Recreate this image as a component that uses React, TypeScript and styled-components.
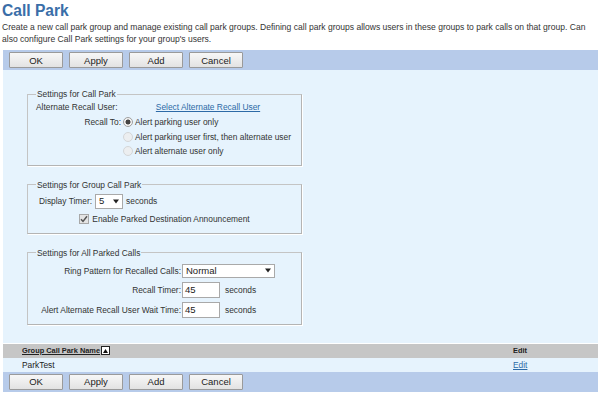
import React from "react";
import styled, { createGlobalStyle } from "styled-components";

const FONT = `"Liberation Sans", Arial, sans-serif`;

const Global = createGlobalStyle`
  body { margin: 0; background: #fff; font-family: ${FONT}; font-size: 8.4px; color: #333; }
`;

const Page = styled.div`
  width: 600px;
  padding: 0 2px 0 3px;
  box-sizing: border-box;
`;

const Title = styled.h1`
  margin: 0 0 0 -1px;
  font-size: 15.6px;
  line-height: 22px;
  font-weight: bold;
  color: #3a6ea8;
`;

const Desc = styled.p`
  margin: 0 0 5px -1px;
  font-size: 8.55px;
  line-height: 11.5px;
  color: #333;
`;

const Toolbar = styled.div`
  display: flex;
  gap: 6px;
  align-items: center;
  height: 20px;
  padding: 0 6px;
  background: #b7cbea;
`;

const Button = styled.button`
  width: 54px;
  height: 16px;
  padding: 0;
  font-family: ${FONT};
  font-size: 9.5px;
  color: #222;
  background: linear-gradient(#f7f7f7, #e3e3e3);
  border: 1px solid #9a9a9a;
  border-radius: 1px;
`;

const Panel = styled.div`
  background: #e6f3fd;
  padding: 18px 0 18px 24px;
  display: flex;
  flex-direction: column;
`;

const Fieldset = styled.fieldset<{ $pt?: number; $pb?: number; $mt?: number }>`
  width: 275px;
  box-sizing: border-box;
  margin: ${(p) => p.$mt ?? 0}px 0 0 0;
  padding: ${(p) => p.$pt ?? 1}px 8px ${(p) => p.$pb ?? 8}px 8px;
  border: 1px solid #c4c4c4;
  border-right-color: #b4b4b4;
  border-bottom-color: #b4b4b4;
  box-shadow: 1px 1px 0 #fff;
`;

const Legend = styled.legend`
  padding: 0 1px;
  font-size: 8.4px;
  line-height: 12px;
  color: #333;
`;

const Grid = styled.div<{ $cols: string; $gap?: number }>`
  display: grid;
  grid-template-columns: ${(p) => p.$cols};
  row-gap: ${(p) => p.$gap ?? 3}px;
  align-items: center;
`;

const Label = styled.div<{ $align?: string; $top?: boolean; $pr?: number }>`
  text-align: ${(p) => p.$align ?? "right"};
  padding-right: ${(p) => p.$pr ?? 2}px;
  white-space: nowrap;
  font-size: 8.4px;
  line-height: 12px;
  ${(p) => (p.$top ? "align-self: start; padding-top: 1px;" : "")}
`;

const Cell = styled.div<{ $center?: boolean; $pl?: number; $gap?: number }>`
  display: flex;
  align-items: center;
  gap: ${(p) => p.$gap ?? 4}px;
  min-height: 12px;
  white-space: nowrap;
  font-size: 8.4px;
  line-height: 12px;
  padding-left: ${(p) => p.$pl ?? 0}px;
  ${(p) => (p.$center ? "justify-content: center;" : "")}
`;

const Link = styled.a`
  color: #2d6aa6;
  text-decoration: underline;
  font-size: 8.4px;
  cursor: pointer;
`;

const Radio = styled.span<{ $checked?: boolean; $disabled?: boolean }>`
  width: 10px;
  height: 10px;
  border-radius: 50%;
  box-sizing: border-box;
  border: 1px solid ${(p) => (p.$disabled ? "#d4d6d8" : "#a0a0a0")};
  background: ${(p) =>
    p.$checked
      ? "radial-gradient(circle, #444 0 2.2px, #f2f2f2 2.8px)"
      : "#eceef0"};
  margin-right: 2px;
  flex: none;
`;

const RadioLine = styled.div`
  display: flex;
  align-items: center;
  height: 14.5px;
  white-space: nowrap;
`;

const Check = styled.span`
  width: 10px;
  height: 10px;
  box-sizing: border-box;
  border: 1px solid #a8a8a8;
  background: #e4e4e4;
  display: inline-flex;
  align-items: center;
  justify-content: center;
`;

const SelectBox = styled.div<{ $w: number; $h?: number }>`
  width: ${(p) => p.$w}px;
  height: ${(p) => p.$h ?? 15}px;
  box-sizing: border-box;
  background: #fff;
  border: 1px solid #a9a9a9;
  display: flex;
  align-items: center;
  justify-content: space-between;
  padding: 0 3px;
  font-size: 9.5px;
  color: #222;
`;

const Input = styled.div`
  width: 38px;
  height: 16px;
  box-sizing: border-box;
  background: #fff;
  border: 1px solid #a9a9a9;
  display: flex;
  align-items: center;
  padding-left: 2px;
  font-size: 9.5px;
  color: #222;
  margin-right: 1px;
`;

const Row = styled.div<{ $head?: boolean }>`
  display: grid;
  grid-template-columns: 1fr 85px;
  align-items: center;
  height: 14px;
  padding-left: 19px;
  background: ${(p) => (p.$head ? "#c6c6c6" : "#e6f3fd")};
  font-size: ${(p) => (p.$head ? 7.4 : 8.4)}px;
  color: #222;
  font-weight: ${(p) => (p.$head ? "bold" : "normal")};
`;

const HeadLink = styled.span`
  display: flex;
  align-items: center;
  gap: 1px;
  text-decoration: underline;
`;

const SortIcon = styled.span`
  width: 9px;
  height: 9px;
  box-sizing: border-box;
  border: 1px solid #222;
  background: #fff;
  display: inline-flex;
  align-items: center;
  justify-content: center;
`;

const Arrow = () => (
  <svg width="6" height="5" viewBox="0 0 6 5">
    <path d="M0 0.5 H6 L3 4.5 Z" fill="#222" />
  </svg>
);

const Buttons = () => (
  <Toolbar>
    <Button>OK</Button>
    <Button>Apply</Button>
    <Button>Add</Button>
    <Button>Cancel</Button>
  </Toolbar>
);

export default function App() {
  return (
    <>
      <Global />
      <Page>
        <Title>Call Park</Title>
        <Desc>
          Create a new call park group and manage existing call park groups. Defining call park groups allows users in these groups to park calls on that group. Can also configure Call Park settings for your group's users.
        </Desc>
        <Buttons />
        <Panel>
          <Fieldset $pb={6}>
            <Legend>Settings for Call Park</Legend>
            <Grid $cols="87px 1fr" $gap={2}>
              <Label $align="left">Alternate Recall User:</Label>
              <Cell $center>
                <Link>Select Alternate Recall User</Link>
              </Cell>
              <Label $top>Recall To:</Label>
              <div>
                <RadioLine>
                  <Radio $checked />
                  Alert parking user only
                </RadioLine>
                <RadioLine>
                  <Radio $disabled />
                  Alert parking user first, then alternate user
                </RadioLine>
                <RadioLine>
                  <Radio $disabled />
                  Alert alternate user only
                </RadioLine>
              </div>
            </Grid>
          </Fieldset>
          <Fieldset $pt={3} $pb={8} $mt={13}>
            <Legend>Settings for Group Call Park</Legend>
            <Grid $cols="1fr" $gap={4}>
              <Cell $pl={3} $gap={3}>
                Display Timer:
                <SelectBox $w={28}>
                  5
                  <Arrow />
                </SelectBox>
                seconds
              </Cell>
              <Cell $center $gap={3}>
                <Check>
                  <svg width="8" height="8" viewBox="0 0 8 8">
                    <path d="M1 4.2 L3 6.4 L7 1.2" stroke="#555" strokeWidth="1.5" fill="none" />
                  </svg>
                </Check>
                Enable Parked Destination Announcement
              </Cell>
            </Grid>
          </Fieldset>
          <Fieldset $pt={5} $pb={6} $mt={13}>
            <Legend>Settings for All Parked Calls</Legend>
            <Grid $cols="146px 1fr" $gap={4}>
              <Label $pr={1}>Ring Pattern for Recalled Calls:</Label>
              <Cell>
                <SelectBox $w={93} $h={14}>
                  Normal
                  <Arrow />
                </SelectBox>
              </Cell>
              <Label $pr={1}>Recall Timer:</Label>
              <Cell>
                <Input>45</Input>
                seconds
              </Cell>
              <Label $pr={1}>Alert Alternate Recall User Wait Time:</Label>
              <Cell>
                <Input>45</Input>
                seconds
              </Cell>
            </Grid>
          </Fieldset>
        </Panel>
        <Row $head style={{ marginTop: 1 }}>
          <HeadLink>
            Group Call Park Name
            <SortIcon>
              <svg width="5" height="4" viewBox="0 0 5 4">
                <path d="M0 4 L2.5 0 L5 4 Z" fill="#111" />
              </svg>
            </SortIcon>
          </HeadLink>
          <span>Edit</span>
        </Row>
        <Row>
          <span>ParkTest</span>
          <Link>Edit</Link>
        </Row>
        <Buttons />
      </Page>
    </>
  );
}
